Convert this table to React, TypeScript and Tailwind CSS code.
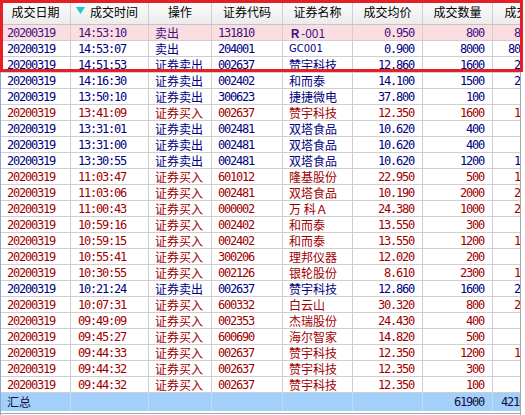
import React from "react";

type Row = {
  t: string;
  op: string;
  code: string;
  name: string;
  price: string;
  qty: string;
  amt: string;
  buy: boolean;
};

const rows: Row[] = [
  { t: "14:53:10", op: "卖出", code: "131810", name: "Ｒ-001", price: "0.950", qty: "800", amt: "80000.00", buy: false },
  { t: "14:53:07", op: "卖出", code: "204001", name: "GC001", price: "0.900", qty: "8000", amt: "800000.00", buy: false },
  { t: "14:51:53", op: "证券卖出", code: "002637", name: "赞宇科技", price: "12.860", qty: "1600", amt: "20576.00", buy: false },
  { t: "14:16:30", op: "证券卖出", code: "002402", name: "和而泰", price: "14.100", qty: "1500", amt: "21150.00", buy: false },
  { t: "13:50:10", op: "证券卖出", code: "300623", name: "捷捷微电", price: "37.800", qty: "100", amt: "3780.00", buy: false },
  { t: "13:41:09", op: "证券买入", code: "002637", name: "赞宇科技", price: "12.350", qty: "1600", amt: "19760.00", buy: true },
  { t: "13:31:01", op: "证券卖出", code: "002481", name: "双塔食品", price: "10.620", qty: "400", amt: "4248.00", buy: false },
  { t: "13:31:00", op: "证券卖出", code: "002481", name: "双塔食品", price: "10.620", qty: "400", amt: "4248.00", buy: false },
  { t: "13:30:55", op: "证券卖出", code: "002481", name: "双塔食品", price: "10.620", qty: "1200", amt: "12744.00", buy: false },
  { t: "11:03:47", op: "证券买入", code: "601012", name: "隆基股份", price: "22.950", qty: "500", amt: "11475.00", buy: true },
  { t: "11:03:06", op: "证券买入", code: "002481", name: "双塔食品", price: "10.190", qty: "2000", amt: "20380.00", buy: true },
  { t: "11:00:43", op: "证券买入", code: "000002", name: "万 科Ａ", price: "24.380", qty: "1000", amt: "24380.00", buy: true },
  { t: "10:59:16", op: "证券买入", code: "002402", name: "和而泰", price: "13.550", qty: "300", amt: "4065.00", buy: true },
  { t: "10:59:15", op: "证券买入", code: "002402", name: "和而泰", price: "13.550", qty: "1200", amt: "16260.00", buy: true },
  { t: "10:55:41", op: "证券买入", code: "300206", name: "理邦仪器", price: "12.020", qty: "200", amt: "2404.00", buy: true },
  { t: "10:30:55", op: "证券买入", code: "002126", name: "银轮股份", price: "8.610", qty: "2300", amt: "19803.00", buy: true },
  { t: "10:21:24", op: "证券卖出", code: "002637", name: "赞宇科技", price: "12.860", qty: "1600", amt: "20576.00", buy: false },
  { t: "10:07:31", op: "证券买入", code: "600332", name: "白云山", price: "30.320", qty: "800", amt: "24256.00", buy: true },
  { t: "09:49:09", op: "证券买入", code: "002353", name: "杰瑞股份", price: "24.430", qty: "400", amt: "9772.00", buy: true },
  { t: "09:45:27", op: "证券买入", code: "600690", name: "海尔智家", price: "14.820", qty: "500", amt: "7410.00", buy: true },
  { t: "09:44:33", op: "证券买入", code: "002637", name: "赞宇科技", price: "12.350", qty: "1200", amt: "14820.00", buy: true },
  { t: "09:44:32", op: "证券买入", code: "002637", name: "赞宇科技", price: "12.350", qty: "300", amt: "3705.00", buy: true },
  { t: "09:44:32", op: "证券买入", code: "002637", name: "赞宇科技", price: "12.350", qty: "100", amt: "1235.00", buy: true },
];

const num = "[font-family:'DejaVu_Sans_Mono',monospace] text-[12px] tracking-[-1.22px]";
const cjk = "[font-family:'Noto_Sans_CJK_SC',sans-serif] text-[12px]";
const cell = "shrink-0 h-full flex items-center border-r border-[#cfcfcf] overflow-hidden whitespace-nowrap";

export default function App() {
  return (
    <div className="relative w-[525px] h-[415px] bg-white overflow-hidden flex">
      <div className="w-[520px] h-full overflow-hidden border-l border-[#8fa6c6] flex flex-col">
        {/* header */}
        <div className="flex h-[25px] shrink-0 border-b border-[#c4c4c4] bg-gradient-to-b from-[#fdfdfd] to-[#ececec] text-black">
          <div className={`${cell} w-[70px] justify-center ${cjk}`}>成交日期</div>
          <div className={`${cell} w-[78px] pl-[5px] ${cjk}`}>
            <svg width="9" height="8" viewBox="0 0 9 8" className="mr-[5px] mb-[3px]">
              <polygon points="0,0 9,0 4.5,7" fill="#1cc6d6" />
            </svg>
            成交时间
          </div>
          <div className={`${cell} w-[63px] justify-center ${cjk}`}>操作</div>
          <div className={`${cell} w-[71px] justify-center ${cjk}`}>证券代码</div>
          <div className={`${cell} w-[70px] justify-center ${cjk}`}>证券名称</div>
          <div className={`${cell} w-[70px] justify-center ${cjk}`}>成交均价</div>
          <div className={`${cell} w-[70px] justify-center ${cjk}`}>成交数量</div>
          <div className={`${cell} w-[72px] justify-center ${cjk}`}>成交金额</div>
        </div>
        {/* rows */}
        {rows.map((r, i) => {
          const sel = i === 0;
          const color = sel ? "text-[#3c1486]" : r.buy ? "text-[#a00000]" : "text-[#000080]";
          return (
            <div
              key={i}
              className={`flex h-4 shrink-0 border-b border-[#cfcfcf] ${color} ${sel ? "bg-[#fcdde2]" : "bg-white"}`}
            >
              <div className={`${cell} w-[70px] pl-[6px] ${num}`}>20200319</div>
              <div className={`${cell} w-[78px] pl-[7px] ${num}`}>{r.t}</div>
              <div className={`${cell} w-[63px] pl-[6px] ${cjk}`}>{r.op}</div>
              <div className={`${cell} w-[71px] pl-[6px] ${num}`}>{r.code}</div>
              <div
                className={`${cell} w-[70px] pl-[6px] ${
                  r.name === "GC001" ? "[font-family:'DejaVu_Sans',sans-serif] text-[10px]" : cjk
                }`}
              >
                {r.name === "Ｒ-001" ? (
                  <>
                    <span className="font-bold">Ｒ</span>-001
                  </>
                ) : (
                  r.name
                )}
              </div>
              <div className={`${cell} w-[70px] justify-end pr-[8px] ${num}`}>{r.price}</div>
              <div className={`${cell} w-[70px] justify-end pr-[8px] ${num}`}>{r.qty}</div>
              <div className={`${cell} w-[72px] justify-end pr-[2px] ${num}`}>{r.amt}</div>
            </div>
          );
        })}
        {/* summary */}
        <div className="flex h-[18px] shrink-0 bg-[#a2d0fa] text-[#101040]">
          <div className={`shrink-0 h-full flex items-center w-[70px] pl-[6px] border-r border-[#bcdcf8] ${cjk}`}>汇总</div>
          <div className="shrink-0 h-full w-[78px] border-r border-[#bcdcf8]" />
          <div className="shrink-0 h-full w-[63px] border-r border-[#bcdcf8]" />
          <div className="shrink-0 h-full w-[71px] border-r border-[#bcdcf8]" />
          <div className="shrink-0 h-full w-[70px] border-r border-[#bcdcf8]" />
          <div className="shrink-0 h-full w-[70px] border-r border-[#bcdcf8]" />
          <div className={`shrink-0 h-full flex items-center justify-end w-[70px] pr-[8px] border-r border-[#bcdcf8] ${num}`}>61900</div>
          <div className={`shrink-0 h-full flex items-center w-[72px] pl-[8px] whitespace-nowrap ${num}`}>421652.00</div>
        </div>
        <div className="h-[2px] shrink-0 bg-white" />
        <div className="h-px shrink-0 bg-[#a8a8a8]" />
        <div className="flex-1 bg-white" />
      </div>
      <div className="w-px h-full bg-[#a8a8a8]" />
      <div className="flex-1 h-full bg-white" />
      {/* red highlight box */}
      <div className="absolute left-0 top-0 w-[523px] h-[72px] border-[3px] border-[#e41f25] pointer-events-none" />
    </div>
  );
}
